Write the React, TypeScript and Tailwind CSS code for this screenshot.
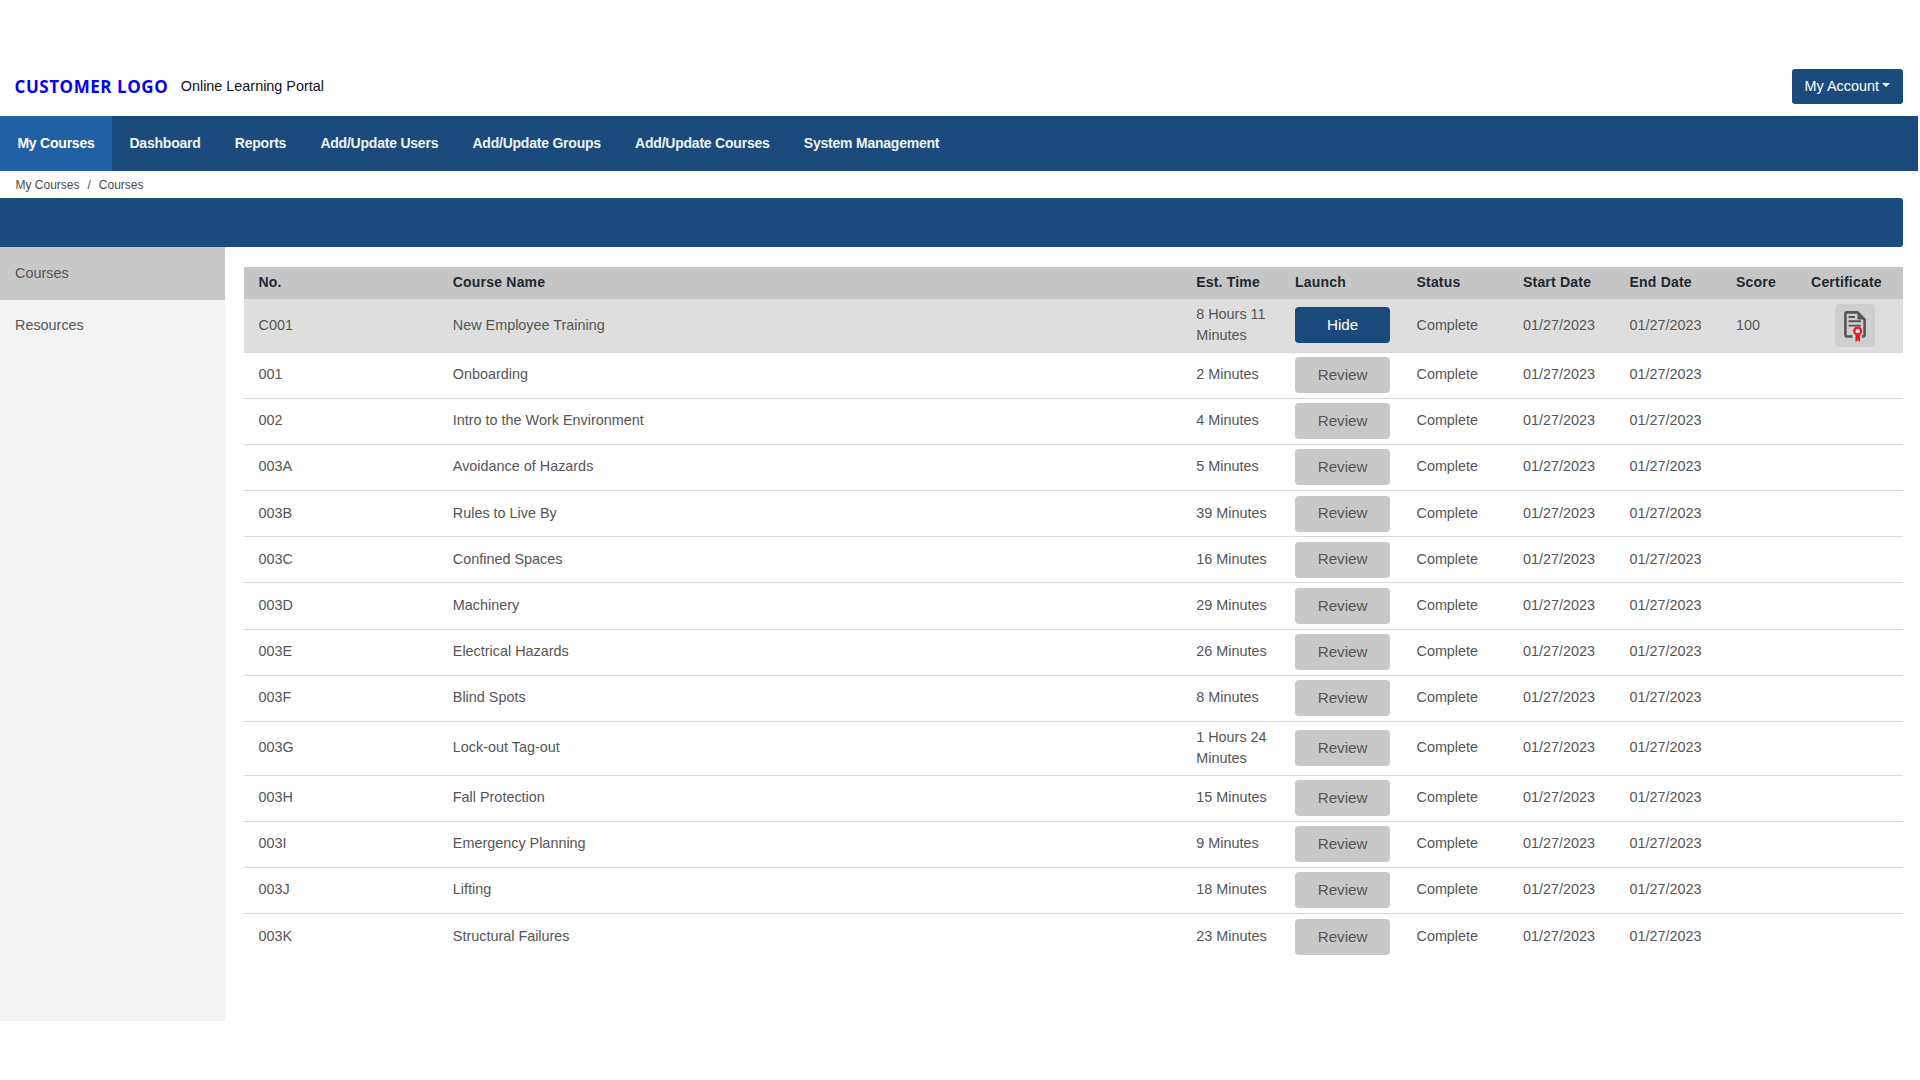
const NAV_ITEMS = ["My Courses", "Dashboard", "Reports", "Add/Update Users", "Add/Update Groups", "Add/Update Courses", "System Management"];

const COLUMNS = ["No.", "Course Name", "Est. Time", "Launch", "Status", "Start Date", "End Date", "Score", "Certificate"];

const COURSES = [
  { no: "001", name: "Onboarding", time: "2 Minutes" },
  { no: "002", name: "Intro to the Work Environment", time: "4 Minutes" },
  { no: "003A", name: "Avoidance of Hazards", time: "5 Minutes" },
  { no: "003B", name: "Rules to Live By", time: "39 Minutes" },
  { no: "003C", name: "Confined Spaces", time: "16 Minutes" },
  { no: "003D", name: "Machinery", time: "29 Minutes" },
  { no: "003E", name: "Electrical Hazards", time: "26 Minutes" },
  { no: "003F", name: "Blind Spots", time: "8 Minutes" },
  { no: "003G", name: "Lock-out Tag-out", time: "1 Hours 24 Minutes" },
  { no: "003H", name: "Fall Protection", time: "15 Minutes" },
  { no: "003I", name: "Emergency Planning", time: "9 Minutes" },
  { no: "003J", name: "Lifting", time: "18 Minutes" },
  { no: "003K", name: "Structural Failures", time: "23 Minutes" },
];

function CertificateIcon() {
  return (
    <svg className="mt-[3px]" width="22" height="31" viewBox="0 0 22 31" fill="none">
      {/* Page with folded corner */}
      <path d="M8.5 25.5H2.8A1.4 1.4 0 0 1 1.4 24.1V2.8A1.4 1.4 0 0 1 2.8 1.4H13.5L20.6 8.5V24.1A1.4 1.4 0 0 1 19.2 25.5H18" stroke="#565656" strokeWidth="2.6" />
      <path d="M13.5 1.4V8.5H20.6Z" fill="#565656" />
      <path d="M4.5 6H11M4.5 10.3H17M4.5 14.6H17" stroke="#565656" strokeWidth="1.9" />
      {/* Red seal */}
      <circle cx="13.7" cy="20" r="3.4" stroke="#f5141e" strokeWidth="2.2" fill="#dcdcdc" />
      <path d="M11.6 23.5L11.4 31L13.7 29.2L16 31L15.8 23.5Z" fill="#f5141e" />
    </svg>
  );
}

function CourseRow({ no, name, time }: { no: string; name: string; time: string }) {
  return (
    <tr className="border-b-[1.5px] border-[#d8d8d8] last:border-b-0">
      <td className="h-[46.2px] pb-[0.5px] pl-[15px]">{no}</td>
      <td className="pb-[0.5px] pl-[15px]">{name}</td>
      <td className="pb-[5px] pl-[15px] pt-[4.5px] leading-[21.5px]">{time}</td>
      <td className="pl-[15px]">
        <button className="h-[36px] w-[95px] rounded-[4px] bg-[#c8c8c8] text-[15.2px] text-[#555]">Review</button>
      </td>
      <td className="pb-[0.5px] pl-[15px]">Complete</td>
      <td className="pb-[0.5px] pl-[15px]">01/27/2023</td>
      <td className="pb-[0.5px] pl-[15px]">01/27/2023</td>
      <td className="pl-[15px]" />
      <td />
    </tr>
  );
}

export default function App() {
  return (
    <div className="h-[1080px] w-[1918px] bg-white font-['Liberation_Sans',Arial,sans-serif]">
      {/* Top bar */}
      <header className="flex h-[116px] items-end pb-[12.5px] pl-[14.5px] pr-[15.5px]">
        <div className="flex h-[35px] flex-1 items-center">
          <span className="pt-[1px] font-['Open_Sans',sans-serif] text-[17px] font-bold tracking-[0.55px] text-[#0000f5]">CUSTOMER LOGO</span>
          <span className="ml-[12.5px] pt-[1px] text-[14.4px] text-[#111]">Online Learning Portal</span>
        </div>
        <button className="flex h-[35px] w-[110.5px] items-center justify-center gap-[3px] rounded-[3px] bg-[#1b4a7c] pt-[1px] text-[14.4px] font-medium text-white">
          My Account
          <span className="mb-[3px] border-x-[4px] border-t-[4.5px] border-x-transparent border-t-white" />
        </button>
      </header>

      {/* Main nav */}
      <nav className="flex h-[55px] bg-[#1b4a7c]">
        {NAV_ITEMS.map((item, i) => (
          <a
            key={item}
            className={
              i === 0
                ? "mr-[0.4px] flex w-[112px] items-center justify-center bg-[#2260a6] text-[14px] font-bold tracking-[-0.22px] text-white"
                : "flex items-center px-[17.1px] text-[14px] font-bold tracking-[-0.22px] text-[#f0f3f7]"
            }
          >
            {item}
          </a>
        ))}
      </nav>

      {/* Breadcrumb */}
      <div className="flex h-[27px] items-center gap-[8px] pl-[15.5px] pt-[1px] text-[12px] text-[#4d4d4d]">
        <span>My Courses</span>
        <span>/</span>
        <span>Courses</span>
      </div>

      {/* Page title strip */}
      <div className="mr-[15.5px] h-[49px] rounded-r-[3px] bg-[#1b4a7c]" />

      <div className="flex">
        {/* Side menu */}
        <aside className="h-[774px] w-[224.5px] bg-[#f3f3f3] text-[14.4px] text-[#555]">
          <div className="flex h-[52.5px] items-center bg-[#c8c8c8] pl-[15px] pt-[1.5px]">Courses</div>
          <div className="flex h-[52px] items-center pl-[15px] pt-[1.5px]">Resources</div>
        </aside>

        {/* Course table */}
        <main className="flex-1 pl-[19px] pr-[15.5px] pt-[19.5px]">
          <table className="w-full table-fixed border-collapse text-left text-[14.4px] text-[#555]">
            <colgroup>
              <col className="w-[194.3px]" />
              <col className="w-[743.4px]" />
              <col className="w-[98.9px]" />
              <col className="w-[121.4px]" />
              <col className="w-[106.5px]" />
              <col className="w-[106.6px]" />
              <col className="w-[106.5px]" />
              <col className="w-[75px]" />
              <col className="w-[106.4px]" />
            </colgroup>
            <thead>
              <tr className="h-[32px] bg-[#c6c6c6] text-[14px] tracking-[0.2px] text-[#1e2830]">
                {COLUMNS.map((col) => (
                  <th key={col} className="pl-[15px] font-bold whitespace-nowrap">
                    {col}
                  </th>
                ))}
              </tr>
            </thead>
            <tbody>
              <tr className="border-b-[1.5px] border-[#d8d8d8] bg-[#dedede]">
                <td className="h-[53.5px] pl-[15px] pt-[1px]">C001</td>
                <td className="pl-[15px] pt-[1px]">New Employee Training</td>
                <td className="pl-[15px] leading-[21.5px]">8 Hours 11 Minutes</td>
                <td className="pl-[15px]">
                  <button className="h-[36px] w-[95px] rounded-[4px] bg-[#1b4a7c] text-[15.2px] font-medium text-white">Hide</button>
                </td>
                <td className="pl-[15px] pt-[1px]">Complete</td>
                <td className="pl-[15px] pt-[1px]">01/27/2023</td>
                <td className="pl-[15px] pt-[1px]">01/27/2023</td>
                <td className="pl-[15px] pt-[1px]">100</td>
                <td>
                  <div className="ml-[39px] flex h-[43px] w-[40px] items-center justify-center rounded-[4px] bg-[#cfcfcf]">
                    <CertificateIcon />
                  </div>
                </td>
              </tr>
              {COURSES.map((course) => (
                <CourseRow key={course.no} {...course} />
              ))}
            </tbody>
          </table>
        </main>
      </div>
    </div>
  );
}
